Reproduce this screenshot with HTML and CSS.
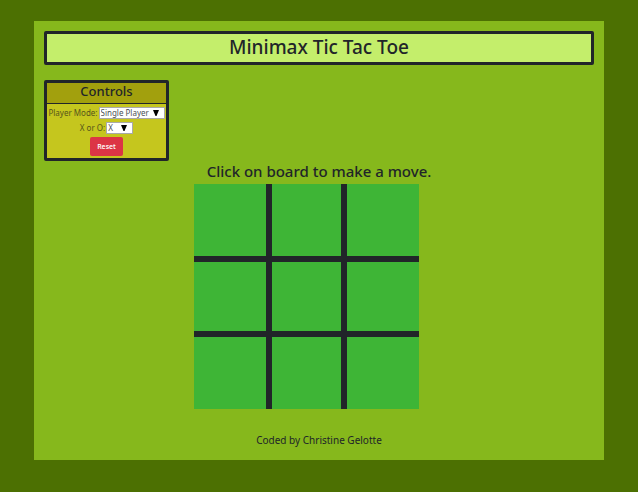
FILE: index.html
```html
<!DOCTYPE html>
<html lang="en">
<head>
<meta charset="utf-8">
<meta name="viewport" content="width=device-width, initial-scale=1">
<title>Minimax Tic Tac Toe</title>
<link rel="stylesheet" href="styles.css">
</head>
<body>
<main class="panel">
  <h1 class="title">Minimax Tic Tac Toe</h1>
  <section class="controls">
    <h2 class="controls-title">Controls</h2>
    <form class="controls-body">
      <div class="field">
        <label for="mode">Player Mode:</label>
        <span class="picker">
          <select id="mode" class="select select-mode"><option>Single Player</option><option>Two Player</option></select>
          <svg class="arrow" viewBox="0 0 6 6" aria-hidden="true"><path d="M0 0H6L3.5 6H2.5Z"/></svg>
        </span>
      </div>
      <div class="field">
        <label for="mark">X or O:</label>
        <span class="picker">
          <select id="mark" class="select select-mark"><option>X</option><option>O</option></select>
          <svg class="arrow" viewBox="0 0 6 6" aria-hidden="true"><path d="M0 0H6L3.5 6H2.5Z"/></svg>
        </span>
      </div>
      <button type="reset" class="reset">Reset</button>
    </form>
  </section>
  <p class="status">Click on board to make a move.</p>
  <div class="board">
    <button class="cell" aria-label="Top left"></button>
    <button class="cell" aria-label="Top middle"></button>
    <button class="cell" aria-label="Top right"></button>
    <button class="cell" aria-label="Middle left"></button>
    <button class="cell" aria-label="Center"></button>
    <button class="cell" aria-label="Middle right"></button>
    <button class="cell" aria-label="Bottom left"></button>
    <button class="cell" aria-label="Bottom middle"></button>
    <button class="cell" aria-label="Bottom right"></button>
  </div>
  <footer class="credit">Coded by Christine Gelotte</footer>
</main>
</body>
</html>
```
FILE: styles.css
```css
* {
  box-sizing: border-box;
}

body {
  margin: 0;
  padding: 21px 34px 32px;
  background: #4c7002;
  color: #212529;
  font-family: "Segoe UI", "Noto Sans", "Open Sans", sans-serif;
}

h1,
h2,
p {
  margin: 0;
  font-weight: 500;
}

.panel {
  padding: 10px 10px 12px;
  background: #86b81c;
}

.title {
  padding-bottom: 2px;
  border: 3px solid #212529;
  border-radius: 2px;
  background: #c4ee6b;
  font-size: 19px;
  line-height: 26px;
  text-align: center;
}

.controls {
  width: 125px;
  margin-top: 15px;
  border: 3px solid #212529;
  border-radius: 2px;
  background: #c5c61e;
}

.controls-title {
  padding-bottom: 3px;
  border-bottom: 1px solid #212529;
  background: #a2a00d;
  font-size: 13px;
  line-height: 17px;
  text-align: center;
}

.controls-body {
  display: flex;
  flex-direction: column;
  align-items: center;
  gap: 2px;
  padding: 3px 0 2px;
  color: #55551c;
  font-size: 8px;
}

.field {
  display: flex;
  align-items: flex-start;
  gap: 1px;
  height: 13px;
  line-height: 12px;
  white-space: nowrap;
}

.picker {
  position: relative;
  display: flex;
}

.select {
  height: 12px;
  margin: 0;
  padding: 0 0 0 1px;
  appearance: none;
  border: 1px solid #a9a9a9;
  border-radius: 0;
  background: #fff;
  color: #495057;
  font: inherit;
  line-height: 10px;
}

.select-mode {
  width: 66px;
}

.select-mark {
  width: 27px;
}

.arrow {
  position: absolute;
  top: 3px;
  right: 6px;
  width: 6px;
  height: 6px;
  fill: #000;
  pointer-events: none;
}

.reset {
  width: 33px;
  height: 19px;
  padding: 0;
  border: 0;
  border-radius: 2px;
  background: #dc3545;
  color: #fff;
  font: 600 7px/19px "Segoe UI", "Open Sans", "Noto Sans", sans-serif;
}

.status {
  padding-bottom: 2px;
  font-size: 15px;
  line-height: 21px;
  text-align: center;
}

.board {
  display: grid;
  grid-template-columns: 72px 69px 72px;
  grid-template-rows: 72px 69px 72px;
  gap: 6px;
  width: 225px;
  margin-left: 150px;
  background: #212529;
}

.cell {
  padding: 0;
  border: 0;
  background: #3eb536;
}

.credit {
  margin-top: 23px;
  font-size: 10px;
  line-height: 16px;
  text-align: center;
}
```
